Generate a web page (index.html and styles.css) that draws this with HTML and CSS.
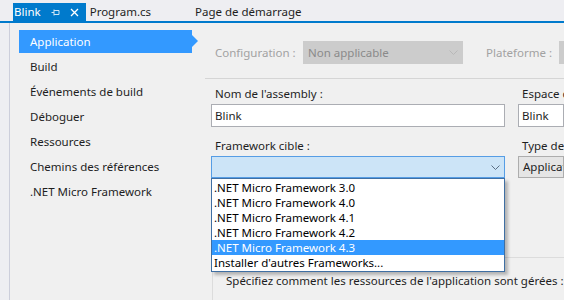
FILE: index.html
```html
<!DOCTYPE html>
<html lang="fr">

<head>
   <meta charset="UTF-8">
   <title>Blink - Propriétés</title>
   <link rel="stylesheet" href="styles.css">
</head>

<body>
   <div class="tabs">
      <div class="tab tab-active">
         Blink
         <svg class="pin" width="9" height="9" viewBox="0 0 9 9">
            <path d="M0.5 4.5H3M3 1.5V7.5M3 2.5H8M3 6.5H8M8 2.5V6.5" stroke="#d0e6f5" fill="none" />
         </svg>
         <svg class="close" width="9" height="9" viewBox="0 0 9 9">
            <path d="M1 1L8 8M8 1L1 8" stroke="#fff" stroke-width="1.3" fill="none" />
         </svg>
      </div>
      <div class="tab">Program.cs</div>
      <div class="tab tab-wide">Page de démarrage</div>
   </div>

   <div class="page">
      <div class="gutter"></div>

      <ul class="nav">
         <li class="nav-item selected">Application</li>
         <li class="nav-item">Build</li>
         <li class="nav-item">Événements de build</li>
         <li class="nav-item">Déboguer</li>
         <li class="nav-item">Ressources</li>
         <li class="nav-item">Chemins des références</li>
         <li class="nav-item">.NET Micro Framework</li>
      </ul>

      <div class="main">
         <div class="config-row">
            <span class="muted config-label">Configuration :</span>
            <div class="select disabled config-select">
               Non applicable
               <span class="chevron">
                  <svg width="9" height="5" viewBox="0 0 9 5"><path d="M0.5 0.5L4.5 4.5L8.5 0.5" stroke="#b8b8b8" fill="none" /></svg>
               </span>
            </div>
            <span class="muted platform-label">Plateforme :</span>
            <div class="select disabled platform-select"></div>
         </div>

         <div class="separator"></div>

         <div class="form">
            <div class="field">
               <label>Nom de l'assembly :</label>
               <div class="input">Blink</div>
            </div>
            <div class="field">
               <label>Espace de noms par défaut :</label>
               <div class="input">Blink</div>
            </div>
            <div class="field">
               <label>Framework cible :</label>
               <div class="select focused">
                  <span class="chevron">
                     <svg width="9" height="5" viewBox="0 0 9 5"><path d="M0.5 0.5L4.5 4.5L8.5 0.5" stroke="#5a6e84" fill="none" /></svg>
                  </span>
                  <ul class="dropdown">
                     <li>.NET Micro Framework 3.0</li>
                     <li>.NET Micro Framework 4.0</li>
                     <li>.NET Micro Framework 4.1</li>
                     <li>.NET Micro Framework 4.2</li>
                     <li class="hover">.NET Micro Framework 4.3</li>
                     <li>Installer d'autres Frameworks...</li>
                  </ul>
               </div>
            </div>
            <div class="field">
               <label>Type de sortie :</label>
               <div class="select grey">Application console</div>
            </div>
         </div>

         <div class="group">
            <p>Spécifiez comment les ressources de l'application sont gérées :</p>
         </div>
      </div>
   </div>
</body>

</html>
```

FILE: styles.css
```css
body {
   margin: 0;
   font-family: "Noto Sans", sans-serif;
   font-size: 11.5px;
   color: #1e1e1e;
   background-color: #f0f0f0;
   height: 300px;
   overflow: hidden;
}

.tabs {
   display: flex;
   align-items: flex-end;
   height: 21px;
   padding-left: 13px;
   background-color: #eeeef2;
   border-bottom: 2px solid #007acc;
}

.tab {
   height: 18px;
   line-height: 18px;
   padding: 0 4px;
   white-space: nowrap;
}

.tab-active {
   display: flex;
   align-items: center;
   gap: 10px;
   padding: 0 7px 0 1px;
   background-color: #007acc;
   color: #fff;
}

.tab-wide {
   margin-left: 36px;
}

.page {
   display: flex;
   height: 277px;
}

.gutter {
   width: 9px;
   flex-shrink: 0;
   background-color: #eeeef2;
   border-right: 1px solid #cccedb;
}

/* left list of property pages */
.nav {
   list-style: none;
   margin: 0;
   padding: 6px 0 0 9px;
   width: 181px;
   flex-shrink: 0;
}

.nav-item {
   height: 25px;
   line-height: 25px;
   padding-left: 11px;
   white-space: nowrap;
}

.nav-item.selected {
   position: relative;
   height: 23px;
   line-height: 23px;
   margin: 1px 0;
   width: 162px;
   background-color: #3399ff;
   color: #fff;
}

.nav-item.selected::after {
   content: "";
   position: absolute;
   right: -6px;
   top: 5px;
   border-top: 6px solid transparent;
   border-bottom: 6px solid transparent;
   border-left: 6px solid #3399ff;
}

.main {
   flex: 1;
   padding: 18px 0 0 11px;
   min-width: 0;
}

.muted {
   color: #a2a2a2;
}

.config-row {
   display: flex;
   align-items: center;
   height: 23px;
   padding-left: 4px;
   white-space: nowrap;
}

.config-row > * {
   flex-shrink: 0;
}

.config-label {
   width: 88px;
}

.select {
   position: relative;
   box-sizing: border-box;
   height: 23px;
   line-height: 21px;
   padding-left: 4px;
   border: 1px solid #adadad;
}

.select.disabled {
   background-color: #cccccc;
   border-color: #cccccc;
   color: #8a8a8a;
}

.config-select {
   width: 160px;
}

.platform-label {
   width: 73px;
   margin-left: 23px;
}

.platform-select {
   width: 60px;
}

.chevron {
   position: absolute;
   right: 4px;
   top: 8px;
   line-height: 0;
}

.separator {
   height: 1px;
   margin: 14px 0 0 -6px;
   background-color: #d5d5d5;
}

.form {
   display: grid;
   grid-template-columns: 294px 1fr;
   column-gap: 13px;
   row-gap: 10px;
   margin-top: 6px;
}

.field {
   min-width: 0;
   white-space: nowrap;
}

.field label {
   display: block;
   height: 18px;
   line-height: 18px;
   padding-left: 4px;
   margin-bottom: 1px;
   overflow: hidden;
}

.input {
   box-sizing: border-box;
   height: 23px;
   line-height: 21px;
   padding-left: 3px;
   background-color: #fff;
   border: 1px solid #abadb3;
   overflow: hidden;
}

.select.focused {
   height: 22px;
   background-color: #cce4f7;
   border-color: #569de5;
}

.select.grey {
   height: 22px;
   line-height: 20px;
   background-color: #e5e5e5;
   border-color: #adadad;
   overflow: hidden;
}

/* open list of the target framework combo */
.dropdown {
   position: absolute;
   z-index: 2;
   left: -1px;
   top: 21px;
   width: 294px;
   box-sizing: border-box;
   list-style: none;
   margin: 0;
   padding: 1px 0;
   background-color: #fff;
   border: 1px solid #3f6fa3;
   box-shadow: 3px 3px 3px rgba(0, 0, 0, 0.25);
   color: #000;
}

.dropdown li {
   height: 15px;
   line-height: 15px;
   padding-left: 2px;
}

.dropdown li.hover {
   background-color: #3399ff;
   color: #fff;
}

.group {
   margin-top: 79px;
   border-top: 1px solid #dcdcdc;
   border-left: 1px solid #dcdcdc;
   margin-left: 1px;
   height: 60px;
}

.group p {
   margin: 15px 0 0 13px;
   white-space: nowrap;
}
```
